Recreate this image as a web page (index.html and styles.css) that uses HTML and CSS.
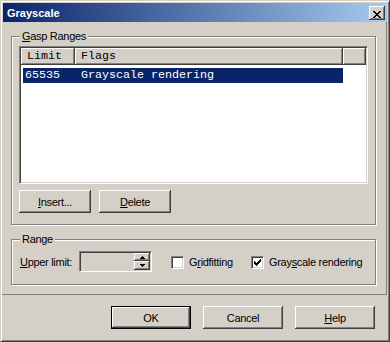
FILE: index.html
```html
<!DOCTYPE html>
<html lang="en">
<head>
  <meta charset="UTF-8">
  <title>Grayscale</title>
  <link rel="stylesheet" href="styles.css">
</head>
<body>
  <div class="window">
    <div class="titlebar">
      <span class="title">Grayscale</span>
      <button class="close" type="button">
        <svg width="8" height="7" viewBox="0 0 8 7" shape-rendering="crispEdges"><path d="M0 0h2v1H0z M6 0h2v1H6z M1 1h2v1H1z M5 1h2v1H5z M2 2h4v1H2z M3 3h2v1H3z M2 4h4v1H2z M1 5h2v1H1z M5 5h2v1H5z M0 6h2v1H0z M6 6h2v1H6z"/></svg>
      </button>
    </div>

    <div class="page">
      <div class="group gasp">
        <span class="caption"><u>G</u>asp Ranges</span>
        <div class="listview">
          <div class="header">
            <div class="col limit">Limit</div>
            <div class="col flags">Flags</div>
            <div class="col filler"></div>
          </div>
          <div class="row selected">
            <span class="c-limit">65535</span>
            <span class="c-flags">Grayscale rendering</span>
          </div>
        </div>
        <div class="gasp-buttons">
          <button class="btn small" type="button"><u>I</u>nsert...</button>
          <button class="btn small" type="button"><u>D</u>elete</button>
        </div>
      </div>

      <div class="group range">
        <span class="caption">Range</span>
        <div class="range-row">
          <label class="field-label"><u>U</u>pper limit:</label>
          <div class="spin">
            <div class="spin-edit"></div>
            <div class="spin-btns">
              <span class="spin-btn up"><svg width="5" height="3" viewBox="0 0 5 3" shape-rendering="crispEdges"><path d="M2 0h1v1h1v1h1v1H0V2h1V1h1z"/></svg></span>
              <span class="spin-btn down"><svg width="5" height="3" viewBox="0 0 5 3" shape-rendering="crispEdges"><path d="M0 0h5v1H4v1H3v1H2V2H1V1H0z"/></svg></span>
            </div>
          </div>
          <label class="check first">
            <span class="box"></span>
            <span class="check-text">G<u>r</u>idfitting</span>
          </label>
          <label class="check">
            <span class="box"><svg width="7" height="7" viewBox="0 0 7 7" shape-rendering="crispEdges"><path d="M6 0h1v1H6z M5 1h2v1H5z M0 2h1v1H0z M4 2h3v1H4z M0 3h2v1H0z M3 3h3v1H3z M0 4h5v1H0z M1 5h3v1H1z M2 6h1v1H2z"/></svg></span>
            <span class="check-text">Gray<u>s</u>cale rendering</span>
          </label>
        </div>
      </div>
    </div>

    <div class="footer">
      <button class="btn default" type="button">OK</button>
      <button class="btn" type="button">Cancel</button>
      <button class="btn" type="button"><u>H</u>elp</button>
    </div>
  </div>
</body>
</html>
```

FILE: styles.css
```css
* { box-sizing: border-box; }
body { margin: 0; background: #d4d0c8; font-family: "Liberation Sans", Arial, sans-serif; font-size: 11px; color: #000; }
u { text-decoration: underline; text-underline-offset: 1px; }

.window { width: 390px; height: 342px; padding: 1px; border: 1px solid; border-color: #d4d0c8 #404040 #404040 #d4d0c8; box-shadow: inset 1px 1px #fff, inset -1px -1px #808080; display: flex; flex-direction: column; }

.titlebar { height: 19px; margin: 1px 1px 0 1px; padding: 0 2px 0 4px; display: flex; align-items: center; justify-content: space-between; background: linear-gradient(to right, #0a246a, #a6caf0); }
.title { color: #fff; font-weight: bold; }
.close { display: block; width: 16px; height: 14px; padding: 0; border: 0; background: #d4d0c8; box-shadow: inset -1px -1px #404040, inset 1px 1px #fff, inset -2px -2px #808080; }
.close svg { display: block; margin: 3px 0 0 4px; }

.page { height: 273px; margin-right: 1px; padding: 14px 0 0 9px; border-right: 1px solid #808080; border-bottom: 1px solid #808080; }

.group { position: relative; width: 365px; border: 1px solid #808080; box-shadow: 1px 1px #fff, inset 1px 1px #fff; }
.caption { position: absolute; top: -7px; left: 8px; padding: 0 2px; line-height: 13px; background: #d4d0c8; letter-spacing: -0.3px; }

.gasp { height: 189px; padding: 9px 0 0 7px; }
.listview { width: 349px; height: 138px; padding: 1px; background: #fff; border: 1px solid; border-color: #808080 #fff #fff #808080; box-shadow: inset 1px 1px #404040, inset -1px -1px #d4d0c8; font-family: "Liberation Mono", "Courier New", monospace; font-size: 11.67px; }
.header { display: flex; height: 17px; }
.col { height: 17px; padding-left: 6px; line-height: 17px; background: #d4d0c8; box-shadow: inset -1px -1px #404040, inset 1px 1px #fff, inset -2px -2px #808080; }
.limit { width: 54px; }
.flags { width: 268px; }
.filler { flex: 1; }
.row { display: flex; width: 320px; height: 15px; margin: 3px 0 0 2px; line-height: 15px; white-space: pre; }
.row.selected { background: #0a246a; color: #fff; }
.c-limit { width: 58px; padding-left: 2px; }

.gasp-buttons { display: flex; gap: 8px; margin-top: 6px; }
.btn { width: 80px; height: 23px; padding: 0; border: 0; background: #d4d0c8; color: #000; font-family: "Liberation Sans", Arial, sans-serif; font-size: 11px; letter-spacing: -0.3px; box-shadow: inset -1px -1px #404040, inset 1px 1px #fff, inset -2px -2px #808080, inset 2px 2px #d4d0c8; }
.btn.small { width: 72px; }
.btn.default { border: 1px solid #000; }

.range { height: 46px; margin-top: 14px; padding: 11px 0 0 8px; }
.range-row { display: flex; align-items: center; letter-spacing: -0.3px; }
.field-label { width: 59px; }
.spin { display: flex; width: 73px; height: 21px; padding: 1px; border: 1px solid; border-color: #808080 #fff #fff #808080; box-shadow: inset 1px 1px #404040, inset -1px -1px #d4d0c8; }
.spin-edit { flex: 1; }
.spin-btns { width: 16px; display: flex; flex-direction: column; }
.spin-btn { display: flex; align-items: center; justify-content: center; background: #d4d0c8; box-shadow: inset -1px -1px #404040, inset 1px 1px #fff, inset -2px -2px #808080; }
.spin-btn.up { height: 8px; }
.spin-btn.down { flex: 1; }
.spin-btn svg { display: block; }

.check { display: flex; align-items: center; gap: 5px; margin-top: 1px; }
.check.first { width: 80px; margin-left: 19px; }
.box { width: 13px; height: 13px; padding: 1px; background: #fff; border: 1px solid; border-color: #808080 #fff #fff #808080; box-shadow: inset 1px 1px #404040, inset -1px -1px #d4d0c8; }
.box svg { display: block; margin: 1px; }

.footer { flex: 1; display: flex; justify-content: flex-end; gap: 12px; padding: 11px 13px 0 0; }
```
